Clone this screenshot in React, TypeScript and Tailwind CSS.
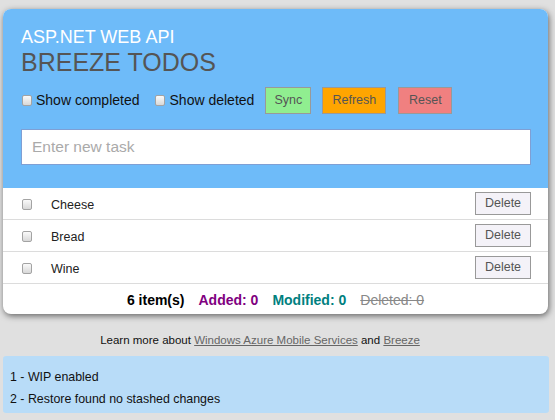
import React from "react";

function Box({ className = "" }: { className?: string }) {
  return (
    <span
      className={
        "inline-block w-[10px] h-[11px] border border-[#a3a3a3] rounded-[2px] bg-linear-to-b from-[#fafafa] to-[#d8d8d8] shrink-0 " +
        className
      }
    />
  );
}

const items = ["Cheese", "Bread", "Wine"];

export default function App() {
  return (
    <div
      className="min-h-[420px] w-[555px] bg-[#e0e0e0] pt-[9px] overflow-hidden"
      style={{ fontFamily: '"Liberation Sans", Arial, sans-serif' }}
    >
      <div className="ml-[3px] w-[545px] rounded-[8px] overflow-hidden bg-white shadow-[1px_2px_6px_rgba(0,0,0,0.55)]">
        <div className="bg-[#6ebbf9] pt-[18px] pl-[18px] pr-[17px] pb-[23px]">
          <div className="text-[18px] leading-[21px] text-white">ASP.NET WEB API</div>
          <div className="text-[25px] leading-[28px] text-[#555]">BREEZE TODOS</div>
          <div className="mt-[11px] flex items-center h-[27px]">
            <Box className="ml-[1px]" />
            <span className="ml-[4px] text-[14px] text-[#111]">Show completed</span>
            <Box className="ml-[15px]" />
            <span className="ml-[5px] text-[14px] text-[#111]">Show deleted</span>
            <button className="ml-[11px] h-[27px] w-[46px] border border-[#999] bg-[#90ee90] text-[12.5px] text-[#555]">
              Sync
            </button>
            <button className="ml-[11px] h-[27px] w-[64px] border border-[#999] bg-[#ffa500] text-[12.5px] text-[#555]">
              Refresh
            </button>
            <button className="ml-[12px] h-[27px] w-[54px] border border-[#999] bg-[#f08080] text-[12.5px] text-[#555]">
              Reset
            </button>
          </div>
          <div className="mt-[15px] h-[36px] w-[510px] bg-white border border-[#7f9fd4] flex items-center pl-[10px]">
            <span className="text-[15.5px] text-[#aaa]">Enter new task</span>
          </div>
        </div>
        {items.map((it) => (
          <div
            key={it}
            className="h-[32px] border-b border-[#dcdcdc] flex items-center pl-[19px] pr-[17px]"
          >
            <Box className="mt-[2px]" />
            <span className="ml-[19px] pt-[4px] text-[12.5px] text-[#222] flex-1">{it}</span>
            <button className="h-[23px] w-[56px] border border-[#999] bg-[#f4f2f8] text-[12.5px] text-[#555]">
              Delete
            </button>
          </div>
        ))}
        <div className="h-[30px] pt-[3px] flex items-center justify-center gap-[14px] text-[14px]">
          <span className="font-bold text-black">6 item(s)</span>
          <span className="font-bold text-[#800080]">Added: 0</span>
          <span className="font-bold text-[#008080]">Modified: 0</span>
          <span className="text-[#888] line-through">Deleted: 0</span>
        </div>
      </div>
      <div className="mt-[20px] pr-[35px] text-center text-[11.5px] leading-[13px] text-[#111]">
        Learn more about <span className="text-[#666] underline">Windows Azure Mobile Services</span> and{" "}
        <span className="text-[#666] underline">Breeze</span>
      </div>
      <div className="mt-[9px] ml-[3px] w-[546px] h-[57px] rounded-[3px] bg-[#b8dcf8] pt-[10px] pl-[7px] text-[12.4px] leading-[22px] text-[#111]">
        <div>1 - WIP enabled</div>
        <div>2 - Restore found no stashed changes</div>
      </div>
    </div>
  );
}
